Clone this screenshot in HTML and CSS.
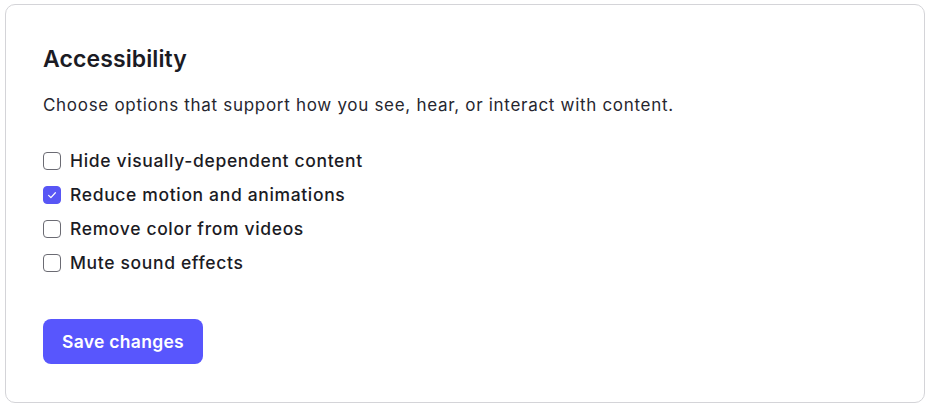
FILE: index.html
```html
<!DOCTYPE html>
<html lang="en">
<head>
    <meta charset="UTF-8">
    <meta name="viewport" content="width=device-width, initial-scale=1.0">
    <title>Accessibility</title>
    <link rel="stylesheet" href="styles.css">
</head>
<body>
    <div class="card">
        <h2 class="card-title">Accessibility</h2>
        <p class="card-desc">Choose options that support how you see, hear, or interact with content.</p>

        <div class="options">
            <label class="option">
                <span class="box"></span>
                <span>Hide visually-dependent content</span>
            </label>
            <label class="option">
                <span class="box checked">
                    <svg viewBox="0 0 16 16" width="12" height="12"><path d="M3.5 8.5l3 3 6-6.5" fill="none" stroke="#fff" stroke-width="1.6" stroke-linecap="round" stroke-linejoin="round"/></svg>
                </span>
                <span>Reduce motion and animations</span>
            </label>
            <label class="option">
                <span class="box"></span>
                <span>Remove color from videos</span>
            </label>
            <label class="option">
                <span class="box"></span>
                <span>Mute sound effects</span>
            </label>
        </div>

        <button class="btn">Save changes</button>
    </div>
</body>
</html>
```

FILE: styles.css
```css
* {
    margin: 0;
    padding: 0;
    box-sizing: border-box;
}
body {
    font-family: Inter, "Open Sans", sans-serif;
    background: #fff;
    color: #1b1b24;
    padding: 4px 5px 2px 5px;
}
.card {
    border: 1px solid #d4d4d8;
    border-radius: 10px;
    padding: 40px 37px 38px 37px;
    display: flex;
    flex-direction: column;
    align-items: flex-start;
}
.card-title {
    font-size: 23px;
    font-weight: 600;
    line-height: 28px;
    letter-spacing: 0.1px;
}
.card-desc {
    font-size: 17px;
    line-height: 24px;
    margin-top: 20px;
    letter-spacing: 0.7px;
    color: #26262f;
}
.options {
    display: flex;
    flex-direction: column;
    gap: 10px;
    margin-top: 32px;
}
.option {
    display: flex;
    align-items: center;
    gap: 9px;
    font-size: 17.5px;
    font-weight: 500;
    line-height: 24px;
    letter-spacing: 0.65px;
}
.box {
    width: 18px;
    height: 18px;
    border: 1.5px solid #6b6b73;
    border-radius: 4px;
    display: flex;
    align-items: center;
    justify-content: center;
}
.box.checked {
    background: #5856f5;
    border-color: #5856f5;
}
.btn {
    margin-top: 44px;
    width: 160px;
    height: 45px;
    border: none;
    border-radius: 8px;
    background: #5856fd;
    color: #fff;
    font-family: inherit;
    font-size: 17.5px;
    font-weight: 600;
    letter-spacing: 0.3px;
}
```
